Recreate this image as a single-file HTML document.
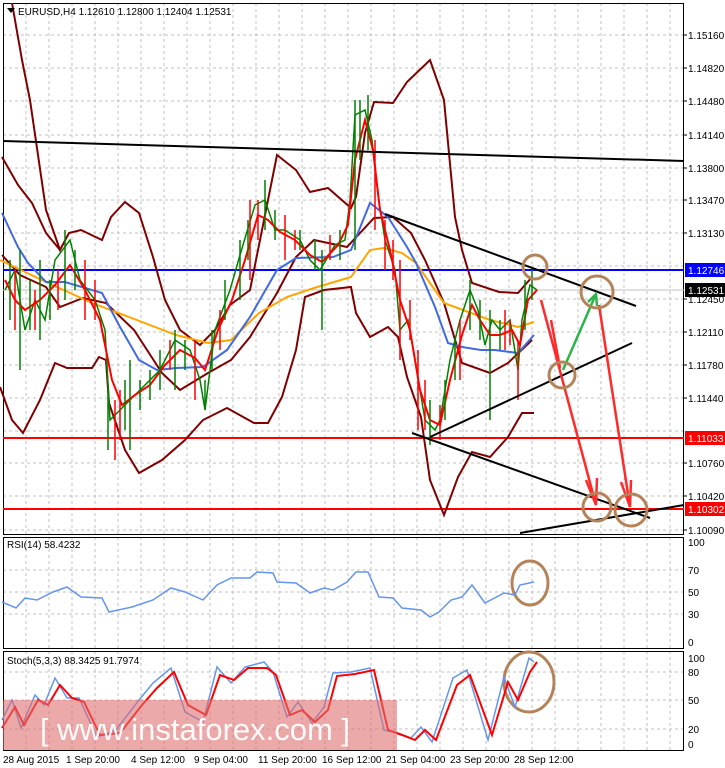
<!DOCTYPE html>
<html><head><meta charset="utf-8"><style>
html,body{margin:0;padding:0;background:#fff;}
svg{display:block;font-family:"Liberation Sans",sans-serif;}
</style></head><body>
<svg width="725" height="768" viewBox="0 0 725 768" xmlns="http://www.w3.org/2000/svg">
<rect width="725" height="768" fill="#fff"/>
<g stroke="#c0c0c0" stroke-dasharray="3,3" stroke-width="1">
<path d="M26 3V750M49 3V750M72 3V750M95 3V750M118 3V750M141 3V750M164 3V750M187 3V750M210 3V750M233 3V750M256 3V750M279 3V750M302 3V750M325 3V750M348 3V750M371 3V750M394 3V750M417 3V750M440 3V750M463 3V750M486 3V750M509 3V750M532 3V750M555 3V750M578 3V750M601 3V750M624 3V750M647 3V750M670 3V750"/>
<path d="M3 35H684M3 68H684M3 101H684M3 135H684M3 168H684M3 200H684M3 233H684M3 266H684M3 299H684M3 332H684M3 365H684M3 398H684M3 431H684M3 463H684M3 496H684M3 530H684"/>
<path d="M3 570H684M3 592H684M3 614H684M3 672H684M3 700H684M3 729H684"/>
</g>
<g fill="none" stroke="#000" stroke-width="1">
<rect x="3.5" y="3.5" width="680" height="531"/>
<rect x="3.5" y="537.5" width="680" height="111"/>
<rect x="3.5" y="651.5" width="680" height="99"/>
</g>
<line x1="3" y1="270" x2="684" y2="270" stroke="#0000ff" stroke-width="2"/>
<line x1="3" y1="290" x2="684" y2="290" stroke="#c0c0c0" stroke-width="1"/>
<line x1="3" y1="438" x2="684" y2="438" stroke="#ff0000" stroke-width="2"/>
<line x1="3" y1="509" x2="684" y2="509" stroke="#ff0000" stroke-width="2"/>
<g fill="none" stroke="#800000" stroke-width="2">
<polyline points="12,3 22,60 30,100 46,210 60,250 69,233 81,230 102,240 111,217 125,202 139,213 153,257 165,300 180,330 200,345 215,330 230,305 250,290 277,155 296,170 310,192 328,188 351,208 356,197 365,133 374,102 393,103 407,82 430,60 444,100 455,217 462,250 472,283 499,292 518,293 532,277"/>
<polyline points="2,157 18,185 32,203 46,233 60,250"/>
<polyline points="0,387 12,420 23,433 40,400 55,363 67,368 92,368 99,357 106,360 109,403 125,450 139,473 162,460 185,440 203,420 227,408 254,423 268,423 282,397 296,350 305,297 324,290 351,287 356,313 370,337 388,327 398,337 407,377 421,417 430,480 444,515 458,477 472,452 490,457 508,437 522,413 534,413"/>
<polyline points="2,255 20,275 46,287 60,307 83,298 106,303 134,330 162,373 180,390 208,373 231,360 250,337 277,293 296,257 314,240 347,247 374,218 393,217 411,233 425,260 444,303 462,363 490,373 508,363 532,340"/>
</g>
<polyline fill="none" stroke="#ffa500" stroke-width="2" points="0,260 46,282 92,303 129,317 176,335 208,343 231,340 259,313 287,297 314,288 351,277 370,250 384,248 402,253 416,263 444,303 490,320 518,327 534,322"/>
<polyline fill="none" stroke="#4169e1" stroke-width="2" points="2,213 18,247 28,263 46,282 65,282 102,293 120,327 139,360 157,370 176,368 203,367 227,350 250,317 277,270 296,258 333,257 351,250 370,203 388,217 407,247 416,263 435,307 448,343 462,347 481,350 495,350 518,353 534,335"/>
<g fill="none" stroke-width="1.5">
<polyline stroke="#008000" points="5,290 15,270 25,330 35,300 45,320 55,260 70,240 80,280 95,300 105,330 110,420 120,410 130,400 145,385 160,370 175,340 190,350 200,380 205,410 215,330 230,290 240,255 255,205 265,200 275,230 285,230 300,240 310,260 320,270 335,245 345,240 350,200 355,115 365,110 372,140 378,195 385,240 395,270 400,330 408,320 415,360 425,420 435,430 440,420 450,360 460,320 470,290 478,310 485,345 492,320 500,330 510,320 518,370 522,320 530,285 537,290"/>
<polyline stroke="#ff0000" stroke-width="2" points="5,280 15,300 25,310 40,300 55,285 70,265 85,290 100,320 112,380 122,405 135,395 150,385 165,365 180,350 195,358 205,370 218,330 232,300 245,260 258,215 268,220 280,232 295,240 310,255 322,262 338,245 348,225 355,160 365,120 373,150 380,210 390,250 400,300 410,330 420,390 430,420 440,425 450,380 462,335 472,305 480,320 490,335 500,335 512,330 520,345 528,300 537,290"/>
<path stroke="#008000" d="M10 260V320M20 250V370M30 280V330M40 260V340M50 280V320M65 230V300M75 250V290M108 390V450M125 380V430M130 360V450M140 380V410M150 370V400M160 350V390M175 330V390M185 340V370M205 380V410M212 330V370M225 280V320M240 240V300M248 220V260M265 180V230M275 210V240M300 230V250M315 240V270M322 250V330M340 230V260M355 100V250M360 100V160M368 95V150M430 400V445M445 380V420M455 340V380M470 280V330M480 300V340M490 310V420M500 320V350M525 280V330M532 270V300"/>
<path stroke="#ff0000" d="M15 270V330M35 290V330M58 270V310M85 260V320M95 280V320M115 400V460M120 390V440M170 340V370M195 340V400M220 310V350M250 200V280M258 200V240M285 215V260M295 230V250M330 235V260M375 140V230M385 220V270M393 240V280M400 260V360M410 300V340M418 350V430M425 380V430M440 405V440M460 320V380M505 310V350M510 320V345M518 340V400"/>
</g>
<g stroke="#000" stroke-width="2">
<line x1="3" y1="141" x2="684" y2="161"/>
<line x1="385" y1="214" x2="636" y2="306"/>
<line x1="412" y1="433" x2="650" y2="518"/>
<line x1="430" y1="437" x2="632" y2="343"/>
<line x1="520" y1="533" x2="684" y2="505"/>
</g>
<g stroke="#ff2a2a" stroke-width="2.5" fill="none">
<line x1="541" y1="300" x2="596" y2="505"/>
<line x1="599" y1="305" x2="630" y2="507"/>
<line x1="551" y1="320" x2="560" y2="368"/>
<path d="M586 480L596 505L597 478M621 482L630 507L631 480"/>
</g>
<g stroke="#2db34a" stroke-width="2.5" fill="none"><line x1="563" y1="370" x2="596" y2="294"/><path d="M588 302L596 294L597 306"/></g>
<g fill="none" stroke="#b5835a" stroke-width="3">
<circle cx="535" cy="267" r="12"/>
<circle cx="597" cy="292" r="16"/>
<circle cx="562" cy="375" r="13"/>
<circle cx="597" cy="507" r="14"/>
<circle cx="631" cy="510" r="16"/>
<ellipse cx="530" cy="583" rx="18" ry="22"/>
<ellipse cx="529" cy="682" rx="25" ry="30"/>
</g>
<polyline fill="none" stroke="#6495ed" stroke-width="1.5" points="2,602 16,608 25,598 37,600 53,592 67,587 81,597 102,598 109,612 132,607 153,600 171,588 185,592 203,600 217,585 231,578 250,578 257,572 273,573 277,582 296,583 310,593 324,588 333,590 347,582 356,572 368,572 379,597 393,598 402,608 421,610 430,617 439,612 451,600 462,597 472,585 485,603 504,593 515,595 520,585 534,582"/>
<polyline fill="none" stroke="#6495ed" stroke-width="1.5" points="2,720 12,700 21,728 35,695 44,705 55,678 67,698 79,698 97,737 116,730 139,700 153,683 171,668 185,712 203,722 217,667 231,683 245,667 264,662 273,672 287,717 298,702 312,723 324,707 333,673 351,672 370,668 384,730 398,733 411,738 421,727 432,742 453,678 467,670 488,740 504,677 515,707 529,658 534,662"/>
<polyline fill="none" stroke="#ff0000" stroke-width="2" points="2,728 15,707 24,725 38,700 48,705 60,685 72,698 84,702 100,735 120,733 142,705 157,688 174,672 188,705 206,715 220,675 234,680 248,668 267,668 276,675 290,715 302,710 315,722 328,710 337,676 355,674 374,670 388,730 402,735 415,740 425,730 436,740 457,685 470,675 492,735 508,682 518,700 530,672 537,662"/>
<rect x="3" y="700" width="394" height="50" fill="#e07070" opacity="0.6"/>
<text x="195" y="740" text-anchor="middle" fill="#fff" font-size="31" opacity="0.95">[ www.instaforex.com ]</text>
<g font-size="10" fill="#000">
<text x="688" y="39">1.15160</text><text x="688" y="72">1.14820</text><text x="688" y="105">1.14480</text><text x="688" y="139">1.14140</text><text x="688" y="172">1.13800</text><text x="688" y="204">1.13470</text><text x="688" y="237">1.13130</text><text x="688" y="303">1.12450</text><text x="688" y="336">1.12110</text><text x="688" y="369">1.11780</text><text x="688" y="402">1.11440</text><text x="688" y="467">1.10760</text><text x="688" y="500">1.10420</text><text x="688" y="534">1.10090</text>
<text x="688" y="546">100</text><text x="688" y="574">70</text><text x="688" y="596">50</text><text x="688" y="618">30</text><text x="688" y="646">0</text>
<text x="688" y="662">100</text><text x="688" y="676">80</text><text x="688" y="704">50</text><text x="688" y="733">20</text><text x="688" y="748">0</text>
</g>
<rect x="685" y="263" width="40" height="14" fill="#0000ff"/><text x="688" y="274" font-size="10" fill="#fff">1.12746</text>
<rect x="685" y="283" width="40" height="14" fill="#000"/><text x="688" y="294" font-size="10" fill="#fff">1.12531</text>
<rect x="685" y="431" width="40" height="14" fill="#ff0000"/><text x="688" y="442" font-size="10" fill="#fff">1.11033</text>
<rect x="685" y="502" width="40" height="14" fill="#ff0000"/><text x="688" y="513" font-size="10" fill="#fff">1.10302</text>
<path d="M684 35h3M684 68h3M684 101h3M684 135h3M684 168h3M684 200h3M684 233h3M684 299h3M684 332h3M684 365h3M684 398h3M684 463h3M684 496h3M684 530h3" stroke="#000"/>
<path d="M7 8h8l-4 5z" fill="#000"/>
<text x="18" y="15" font-size="10" fill="#000">EURUSD,H4  1.12610 1.12800 1.12404 1.12531</text>
<text x="7" y="548" font-size="10" fill="#000">RSI(14) 58.4232</text>
<text x="7" y="664" font-size="10" fill="#000">Stoch(5,3,3) 88.3425 91.7974</text>
<g font-size="10" fill="#000">
<text x="3" y="763">28 Aug 2015</text><text x="66" y="763">1 Sep 20:00</text><text x="131" y="763">4 Sep 12:00</text><text x="194" y="763">9 Sep 04:00</text><text x="258" y="763">11 Sep 20:00</text><text x="322" y="763">16 Sep 12:00</text><text x="386" y="763">21 Sep 04:00</text><text x="450" y="763">23 Sep 20:00</text><text x="514" y="763">28 Sep 12:00</text>
</g>
</svg>
</body></html>
